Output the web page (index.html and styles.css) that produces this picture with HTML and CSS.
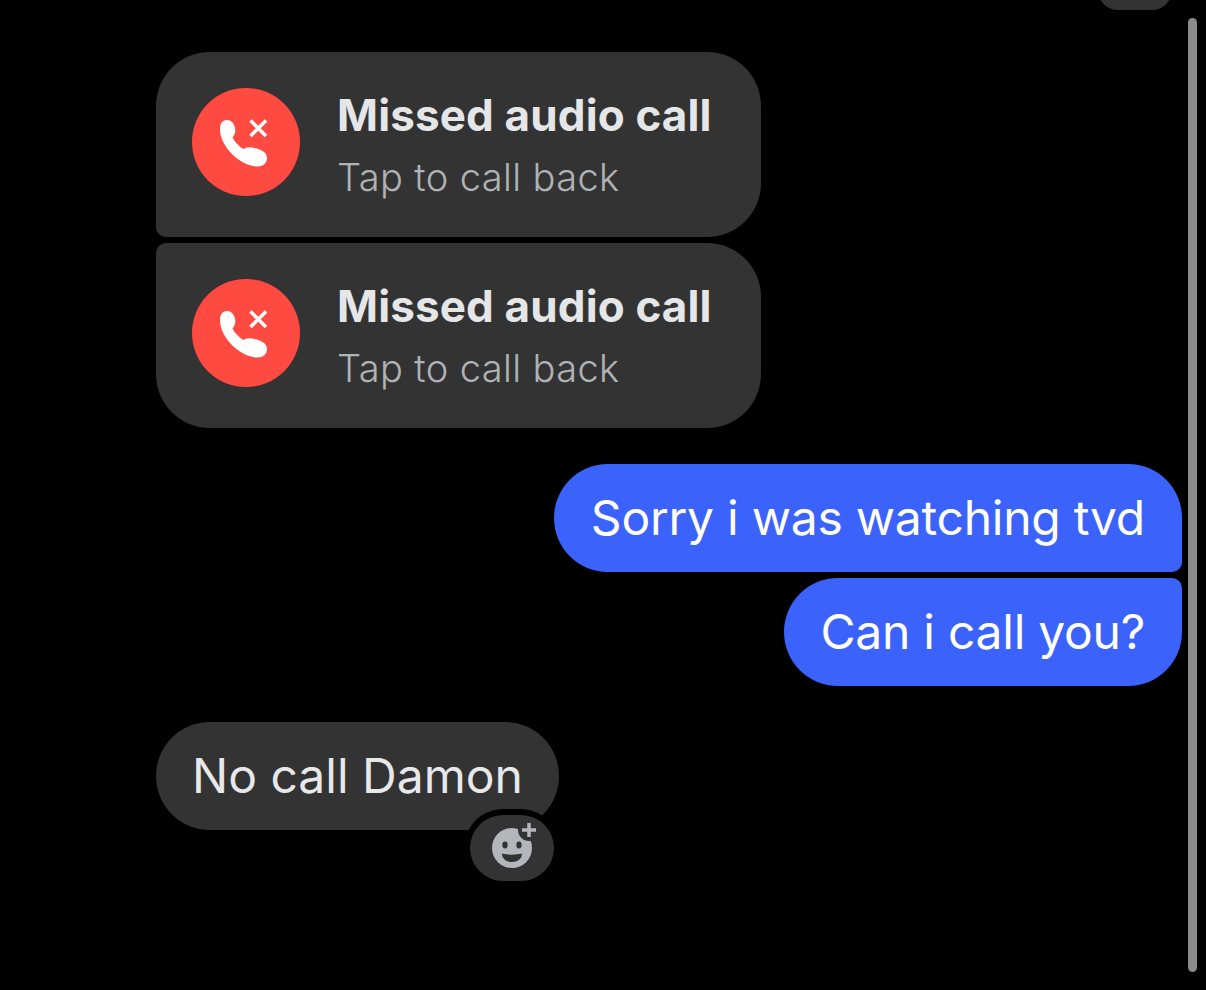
FILE: index.html
```html
<html>
<head>
    <meta charset="utf-8">
    <title>Chat</title>
    <link rel="stylesheet" href="styles.css">
</head>

<body>

<div class="top-pill"></div>
<div class="scrollbar"></div>

<div class="thread">
    <div class="group">
        <div class="bubble call call-first">
            <div class="call-icon">
                <svg viewBox="0 0 108 108" width="108" height="108">
                    <path class="phone" d="M28 41C28 35 31 32 35 32C39 32 41.500 35 42.500 38C44 42 43.500 46 40.500 49.500C42.500 53.500 47 58.500 51.500 61C54.500 59 58.500 59 62.500 60C68.500 61.500 75 64 75 70C75 75 71 78.500 65.500 78.500C50 78.500 28 60 28 41z"/>
                    <path class="cross" d="M58.500 32.500l15.500 15.500M74 32.500L58.500 48"/>
                </svg>
            </div>
            <div class="call-text">
                <div class="call-title">Missed audio call</div>
                <div class="call-sub">Tap to call back</div>
            </div>
        </div>
        <div class="bubble call call-last">
            <div class="call-icon">
                <svg viewBox="0 0 108 108" width="108" height="108">
                    <path class="phone" d="M28 41C28 35 31 32 35 32C39 32 41.500 35 42.500 38C44 42 43.500 46 40.500 49.500C42.500 53.500 47 58.500 51.500 61C54.500 59 58.500 59 62.500 60C68.500 61.500 75 64 75 70C75 75 71 78.500 65.500 78.500C50 78.500 28 60 28 41z"/>
                    <path class="cross" d="M58.500 32.500l15.500 15.500M74 32.500L58.500 48"/>
                </svg>
            </div>
            <div class="call-text">
                <div class="call-title">Missed audio call</div>
                <div class="call-sub">Tap to call back</div>
            </div>
        </div>
    </div>

    <div class="group mine">
        <div class="bubble blue blue-first">Sorry i was watching tvd</div>
        <div class="bubble blue blue-last">Can i call you?</div>
    </div>

    <div class="group">
        <div class="bubble grey">
            No call Damon
            <div class="react">
                <svg viewBox="0 0 48 48" width="48" height="48">
                    <circle class="face" cx="24" cy="24" r="20"/>
                    <circle class="notch" cx="41" cy="6" r="11"/>
                    <ellipse class="eye" cx="17" cy="21" rx="2.700" ry="3.400"/>
                    <ellipse class="eye" cx="31" cy="21" rx="2.700" ry="3.400"/>
                    <path class="eye" d="M14 29.500C20 31 28 31 34 29.500C34 35 29.500 38 24 38S14 35 14 29.500z"/>
                    <path class="plus" d="M41 -1v14M34 6h14"/>
                </svg>
            </div>
        </div>
    </div>
</div>

</body>
</html>
```

FILE: styles.css
```css
html, body { margin: 0; background: #000; height: 100%; overflow: hidden; }
body { font-family: Inter, "Noto Sans", sans-serif; color: #e6e8ea; position: relative; }

.top-pill { position: absolute; left: 1098px; top: -30px; width: 74px; height: 40px; border-radius: 26px; background: #333; }
.scrollbar { position: absolute; left: 1188px; top: 18px; width: 9px; height: 954px; border-radius: 5px; background: #8a8a8a; }

.thread { display: flex; flex-direction: column; gap: 36px; padding: 52px 24px 0 156px; }
.group { display: flex; flex-direction: column; align-items: flex-start; gap: 6px; }
.mine { align-items: flex-end; }

.bubble { box-sizing: border-box; border-radius: 54px; font-size: 48px; line-height: 108px; height: 108px; padding: 0 37px; white-space: nowrap; }
.grey { background: #333; position: relative; padding: 0 36px; }
.blue { background: #3b63fb; color: #fff; letter-spacing: -0.25px; }
.blue-first { border-bottom-right-radius: 10px; }
.blue-last { border-top-right-radius: 10px; padding-left: 36px; }

.call { display: flex; align-items: center; gap: 38px; width: 605px; height: 185px; padding: 0 36px; background: #333; }
.call-first { border-bottom-left-radius: 10px; }
.call-last { border-top-left-radius: 10px; }
.call-icon { width: 108px; height: 108px; border-radius: 50%; background: #ff4a41; flex: none; margin-bottom: 6px; }
.call-icon svg { display: block; }
.phone { fill: #fff; }
.cross { stroke: #fff; stroke-width: 3.500; fill: none; }
.call-text { display: flex; flex-direction: column; gap: 13px; margin: 0 0 1px -1px; }
.call-title { font-size: 44px; line-height: 52px; font-weight: 700; letter-spacing: 0.14px; color: #e4e6e8; }
.call-sub { font-size: 38px; line-height: 46px; font-weight: 300; letter-spacing: 0.38px; color: #b0b3b6; }

.react { position: absolute; right: 5px; top: 93px; width: 84px; height: 66px; border-radius: 33px; background: #333; box-shadow: 0 0 0 6px #000; display: flex; align-items: center; justify-content: center; }
.react svg { display: block; overflow: visible; }
.face { fill: #b4b6bb; }
.notch { fill: #333; }
.eye { fill: #333; }
.plus { stroke: #b4b6bb; stroke-width: 3.500; fill: none; }
```
